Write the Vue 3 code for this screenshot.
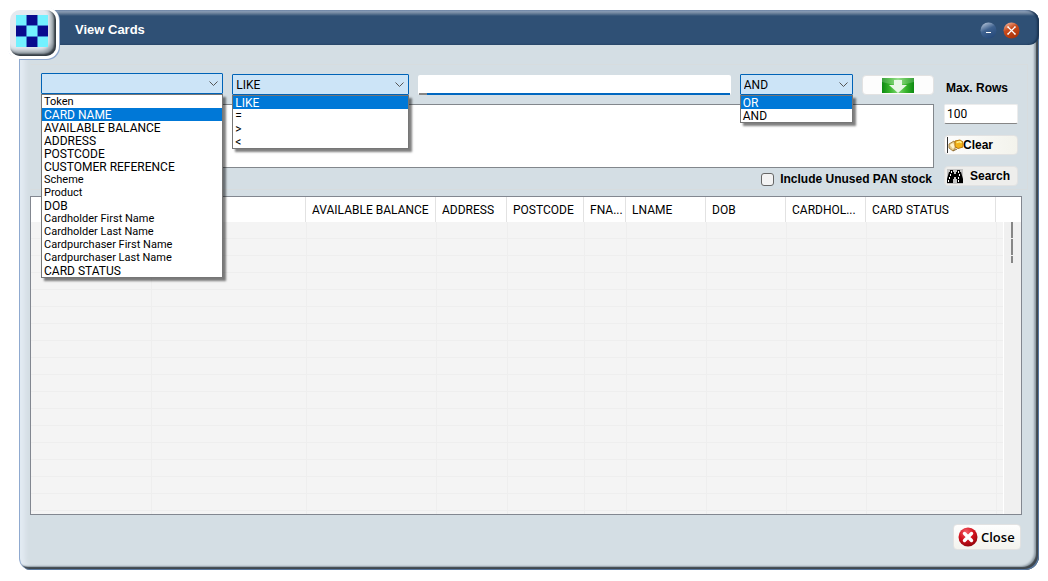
<script setup>
import { ref } from 'vue'

const fields = [
  'Token', 'CARD NAME', 'AVAILABLE BALANCE', 'ADDRESS', 'POSTCODE', 'CUSTOMER REFERENCE',
  'Scheme', 'Product', 'DOB', 'Cardholder First Name', 'Cardholder Last Name',
  'Cardpurchaser First Name', 'Cardpurchaser Last Name', 'CARD STATUS',
]
const operators = ['LIKE', '=', '>', '<']
const joins = ['OR', 'AND']

const columns = [
  { label: '', width: 120 },
  { label: '', width: 155 },
  { label: 'AVAILABLE BALANCE', width: 130 },
  { label: 'ADDRESS', width: 71 },
  { label: 'POSTCODE', width: 77 },
  { label: 'FNA...', width: 42 },
  { label: 'LNAME', width: 80 },
  { label: 'DOB', width: 80 },
  { label: 'CARDHOL...', width: 80 },
  { label: 'CARD STATUS', width: 130 },
  { label: '', width: 25 },
]

const isMixedCase = (text) => text !== text.toUpperCase()

const field = ref('')
const operator = ref('LIKE')
const join = ref('AND')
const term = ref('')
const query = ref('')
const unused = ref(false)
const maxRows = ref('100')
</script>

<template>
  <div class="page">
    <main class="window">
      <header class="titlebar">
        <h1>View Cards</h1>
        <button class="orb" aria-label="Minimize">
          <svg viewBox="0 0 17 17">
            <defs>
              <linearGradient id="blueOrb" x1="0.2" y1="0" x2="0.7" y2="1">
                <stop offset="0" stop-color="#b4c4d8" /><stop offset="0.45" stop-color="#3f628f" />
                <stop offset="1" stop-color="#25497a" />
              </linearGradient>
            </defs>
            <circle cx="8.500" cy="8.500" r="8" fill="url(#blueOrb)" />
            <path d="M6 10.500h5" stroke="#fff" />
          </svg>
        </button>
        <button class="orb" aria-label="Close window">
          <svg viewBox="0 0 17 17">
            <defs>
              <linearGradient id="redOrb" x1="0.2" y1="0" x2="0.7" y2="1">
                <stop offset="0" stop-color="#f3b49a" /><stop offset="0.4" stop-color="#c84a1c" />
                <stop offset="1" stop-color="#a93208" />
              </linearGradient>
            </defs>
            <circle cx="8.500" cy="8.500" r="8" fill="url(#redOrb)" />
            <path d="M5 5l7 7M12 5l-7 7" stroke="#fff" stroke-width="1.200" />
            <path d="M4 5h2M11 5h2M4 12h2M11 12h2" stroke="#fff" />
          </svg>
        </button>
      </header>

      <div class="logo">
        <svg viewBox="0 0 32 32" shape-rendering="crispEdges">
          <rect width="32" height="32" fill="#3f86cf" />
          <path fill="#73f1ff" d="M0 0h10v10H0zM22 0h10v10H22zM11 11h10v10H11zM0 22h10v10H0zM22 22h10v10H22z" />
          <path fill="#090b8e" d="M11 0h10v10H11zM0 11h10v10H0zM22 11h10v10H22zM11 22h10v10H11z" />
        </svg>
      </div>

      <form class="content" @submit.prevent>
        <section class="filters">
          <div class="criteria">
            <div class="line">
              <div class="combo field">
                <select v-model="field" aria-label="Field">
                  <option value=""></option>
                  <option v-for="f in fields" :key="f">{{ f }}</option>
                </select>
                <svg class="chevron" viewBox="0 0 9 5"><path d="M0.500 0.500l4 4l4 -4" /></svg>
                <ul class="popup">
                  <li
                    v-for="f in fields"
                    :key="f"
                    :class="{ active: f === 'CARD NAME', mixed: isMixedCase(f) }"
                  >{{ f }}</li>
                </ul>
              </div>
              <div class="combo operator">
                <select v-model="operator" aria-label="Operator">
                  <option v-for="o in operators" :key="o">{{ o }}</option>
                </select>
                <svg class="chevron" viewBox="0 0 9 5"><path d="M0.500 0.500l4 4l4 -4" /></svg>
                <ul class="popup">
                  <li v-for="o in operators" :key="o" :class="{ active: o === 'LIKE' }">{{ o }}</li>
                </ul>
              </div>
              <input v-model="term" class="term" type="text" aria-label="Search value" />
              <div class="combo join">
                <select v-model="join" aria-label="Join">
                  <option v-for="j in joins" :key="j">{{ j }}</option>
                </select>
                <svg class="chevron" viewBox="0 0 9 5"><path d="M0.500 0.500l4 4l4 -4" /></svg>
                <ul class="popup">
                  <li v-for="j in joins" :key="j" :class="{ active: j === 'OR' }">{{ j }}</li>
                </ul>
              </div>
              <button class="push add" aria-label="Add condition">
                <svg viewBox="0 0 32 15">
                  <defs>
                    <linearGradient id="leaf">
                      <stop offset="0" stop-color="#0d8a12" /><stop offset="0.25" stop-color="#39b52c" />
                      <stop offset="0.5" stop-color="#7fd672" /><stop offset="0.75" stop-color="#39b52c" />
                      <stop offset="1" stop-color="#0d8a12" />
                    </linearGradient>
                  </defs>
                  <rect width="32" height="15" fill="url(#leaf)" />
                  <path d="M0 0h32v4Q16 9 0 4z" fill="#fff" opacity="0.200" />
                  <path d="M12 2h8v5h5l-9 8l-9 -8h5z" fill="#e9f8e6" />
                </svg>
              </button>
            </div>
            <textarea v-model="query" aria-label="Query"></textarea>
            <label class="unused"><input v-model="unused" type="checkbox" />Include Unused PAN stock</label>
          </div>

          <div class="side">
            <label for="max-rows">Max. Rows</label>
            <input id="max-rows" v-model="maxRows" type="text" />
            <button class="push clear">
              <svg viewBox="0 0 16 16">
                <path d="M0.500 0v16" stroke="#333" />
                <path d="M2 7l5 -3l3 5l-4 5l-4 -3z" fill="#e3c98c" stroke="#a98445" />
                <path d="M3 8l3 -2l2 3l-2 3z" fill="#fff4cf" />
                <path d="M8 4l5 -1l3 2v5l-5 1.500l-3 -2z" fill="#f2b41a" stroke="#b8770c" />
                <path d="M9.500 5.500l3.500 -1l1.500 1.500" fill="none" stroke="#fff08a" stroke-width="1.500" />
                <path d="M6 14l4 -2" stroke="#8a6a30" />
              </svg>
              <span>Clear</span>
            </button>
            <button class="push search">
              <svg viewBox="0 0 16 15">
                <rect width="16" height="15" fill="#c4c4c4" />
                <path d="M3 1h3v2h1v2h2V3h1V1h3v2h1l2 7v4h-6v-4H9V8H7v2H6v4H0v-4l2 -7h1z" fill="#000" />
                <path d="M4.500 2v2M3.500 5v2M2.500 8v2M1.500 11v2M11.500 2v2M12.500 5v2M11.500 8v2M11.500 11v2" stroke="#fff" />
              </svg>
              <span>Search</span>
            </button>
          </div>
        </section>

        <div class="grid">
          <table>
            <colgroup>
              <col v-for="(c, i) in columns" :key="i" :style="{ width: c.width + 'px' }" />
            </colgroup>
            <thead>
              <tr>
                <th v-for="(c, i) in columns" :key="i" scope="col">{{ c.label }}</th>
              </tr>
            </thead>
            <tbody>
              <tr v-for="r in 18" :key="r"><td v-for="(c, i) in columns" :key="i"></td></tr>
            </tbody>
          </table>
          <div class="scroll"><i></i><i></i><i></i></div>
        </div>

        <footer>
          <button class="push close">
            <svg viewBox="0 0 20 20">
              <defs>
                <radialGradient id="stop" cx="0.4" cy="0.25" r="0.8">
                  <stop offset="0" stop-color="#f4606a" /><stop offset="0.5" stop-color="#d3141f" />
                  <stop offset="1" stop-color="#8c0209" />
                </radialGradient>
              </defs>
              <circle cx="10" cy="10" r="9.500" fill="url(#stop)" />
              <path d="M6.500 6.500l7 7M13.500 6.500l-7 7" stroke="#fff" stroke-width="3.400" stroke-linecap="round" />
            </svg>
            <span>Close</span>
          </button>
        </footer>
      </form>
    </main>
  </div>
</template>

<style>
body { background: #fff; }
</style>

<style scoped>
* { box-sizing: border-box; }
.page {
  display: flex;
  min-height: 100vh;
  padding: 10px 9px 11px 19px;
  font: 12px/13px Roboto, sans-serif;
  color: #000;
}
.window {
  position: relative;
  flex: 1;
  display: flex;
  flex-direction: column;
  min-width: 0;
  background: #d4dee4;
  border-left: 1px solid #8fa9cf;
  border-radius: 10px 12px 14px 12px;
  box-shadow: inset -1px -1px #5878a0, inset -3px -3px 1px #40484e, inset -5px -4px 2px #98a5ae, inset 5px 0 4px #e2eaf2;
}
.titlebar {
  display: flex;
  align-items: center;
  gap: 6px;
  height: 35px;
  padding: 5px 19px 0 55px;
  background: linear-gradient(#9ab3d6 0, #8496ad 2px, #5c7591 4px, #2f5075 6px);
  border-radius: 0 12px 10px 0;
  box-shadow: inset -2px 0 2px #1b3452;
}
h1 {
  flex: 1;
  margin: 0;
  font: bold 13px/16px "Liberation Sans", sans-serif;
  color: #fff;
}
.orb {
  width: 17px;
  height: 17px;
  padding: 0;
  border: 0;
  background: none;
}
.orb svg, .logo svg { display: block; width: 100%; }
.logo {
  position: absolute;
  left: -10px;
  top: 0;
  width: 46px;
  height: 46px;
  padding: 5px 8px 8px 6px;
  border-radius: 10px;
  background: #e4e9ef;
  box-shadow: inset -2px -2px 2px #333b42, inset -5px -5px 4px #8d979f, 0 0 0 3px #fff, 1px 1px 0 3px #8fa9cf;
  clip-path: inset(-3px -5px -5px -3px);
}
.logo::before {
  content: "";
  position: absolute;
  left: -3px;
  bottom: -4px;
  width: 12px;
  height: 4px;
  background: #fff;
}
.content {
  flex: 1;
  display: flex;
  flex-direction: column;
  padding: 19px 17px 20px 10px;
}
.filters {
  display: flex;
  gap: 10px;
  height: 126px;
  margin: 0 -6px 6px 0;
  padding: 8px 9px 0 10px;
  border: 1px solid #d7dcde;
  border-left-color: transparent;
}
.criteria { flex: 1; display: flex; flex-direction: column; min-width: 0; }
.line { display: flex; gap: 9px; align-items: flex-end; height: 22px; }
.combo { position: relative; min-width: 0; }
.field { flex: 182 1 182px; align-self: flex-start; }
.operator { flex: 177 1 177px; }
.term { flex: 312 1 312px; }
.join { flex: 113 1 113px; }
.add { flex: 72 1 72px; }
select {
  appearance: none;
  display: block;
  width: 100%;
  height: 21px;
  padding: 1px 20px 0 3px;
  border: 1px solid #0063b7;
  border-radius: 1px;
  background: #cce4f7;
  font: inherit;
  color: #000;
}
.chevron {
  position: absolute;
  right: 5px;
  top: 8px;
  width: 9px;
  height: 5px;
  fill: none;
  stroke: #555;
}
.popup {
  position: absolute;
  z-index: 2;
  top: 21px;
  left: 0;
  right: 0;
  margin: 0;
  padding: 0;
  list-style: none;
  border: 1px solid #767676;
  background: #fff;
  box-shadow: 3px 3px 2px rgba(0, 0, 0, 0.5);
}
.popup li {
  height: 13px;
  padding-left: 2px;
  line-height: 14px;
  white-space: nowrap;
}
.popup .mixed { font-size: 11px; }
.popup .active { background: #0078d7; color: #fff; }
.term, #max-rows {
  height: 20px;
  min-width: 0;
  padding: 0 2px;
  border: 1px solid #ececec;
  border-bottom: 1px solid #868686;
  border-radius: 2px;
  background: #fff;
  font: inherit;
}
.term {
  border-bottom: 2px solid #0067c0;
  border-image: linear-gradient(90deg, #868686 8px, #0067c0 8px) 0 0 2 0;
}
textarea {
  height: 64px;
  margin: 9px 0 4px;
  border: 1px solid #82878c;
  border-radius: 0;
  resize: none;
  background: #fff;
  font: inherit;
}
.unused {
  align-self: flex-end;
  display: flex;
  align-items: center;
  gap: 6px;
  margin-right: 2px;
  font: bold 12px/14px "Liberation Sans", sans-serif;
}
.unused input {
  appearance: none;
  width: 13px;
  height: 13px;
  margin: 0;
  border: 1px solid #666;
  border-radius: 3px;
  background: #f3f3f3;
}
.side {
  display: flex;
  flex-direction: column;
  width: 74px;
  font: bold 12px/14px "Liberation Sans", sans-serif;
}
.side label { margin: 8px 0 9px 2px; }
#max-rows { width: 100%; margin-bottom: 11px; font: 12px/13px Roboto, sans-serif; }
.push {
  display: flex;
  align-items: center;
  height: 20px;
  padding: 0;
  border: 1px solid #e2e2e2;
  border-radius: 4px;
  background: #fdfdfd;
  font: bold 12px/14px "Liberation Sans", sans-serif;
  color: #000;
}
.add { justify-content: center; }
.add svg { width: 32px; height: 15px; }
.clear { margin-bottom: 11px; background: linear-gradient(90deg, #fdfdfd, #f3f3ec); }
.clear svg { width: 16px; height: 16px; margin-left: 2px; }
.search { gap: 7px; background: #eeeeec; }
.search svg { width: 16px; height: 15px; margin-left: 2px; }
.grid {
  flex: 1 1 0;
  min-height: 200px;
  position: relative;
  overflow: hidden;
  border: 1px solid #828790;
  background: #f4f4f4;
}
table {
  width: 100%;
  table-layout: fixed;
  border-collapse: separate;
  border-spacing: 0;
}
th {
  height: 25px;
  padding: 2px 0 0 6px;
  border-right: 1px solid #e2e2e2;
  background: #fff;
  font-weight: normal;
  text-align: left;
  white-space: nowrap;
}
th:first-child { border-right-color: #fff; }
th:last-child { border-right: 0; }
td {
  height: 17px;
  padding: 0;
  border-left: 1px solid #eee;
  border-bottom: 1px solid #eee;
}
td:first-child { border-left: 0; }
.scroll {
  position: absolute;
  top: 25px;
  right: 0;
  bottom: 0;
  width: 18px;
  padding-left: 7px;
  border-left: 1px solid #fff;
  background: #f0f0f0;
}
.scroll i {
  display: block;
  width: 2px;
  height: 16px;
  margin-bottom: 1px;
  background: #868686;
}
.scroll i:last-child { height: 7px; }
footer { display: flex; justify-content: flex-end; padding: 9px 1px 0 0; }
.close {
  gap: 3px;
  height: 26px;
  width: 68px;
  padding-left: 4px;
  background: linear-gradient(#fefefe, #f3f3ee);
  font: 600 13px/18px "Open Sans", sans-serif;
}
.close svg { width: 20px; height: 20px; }
</style>
